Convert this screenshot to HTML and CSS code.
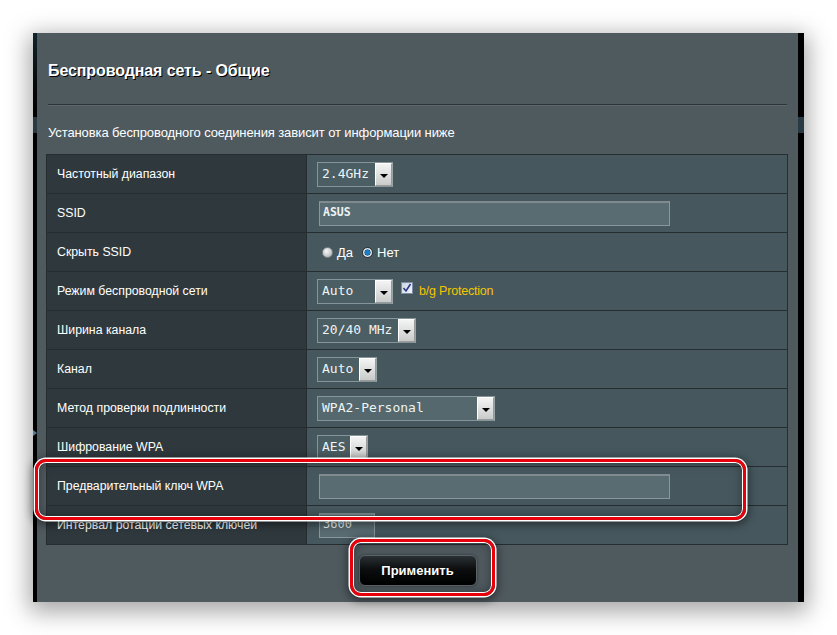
FILE: index.html
```html
<!DOCTYPE html>
<html lang="ru">
<head>
<meta charset="utf-8">
<title>Беспроводная сеть - Общие</title>
<link rel="stylesheet" href="styles.css">
</head>
<body>
<div class="frame">
  <div class="strip-left"><span class="strip-arrow"></span></div>
  <div class="main">
    <h1 class="title">Беспроводная сеть - Общие</h1>
    <div class="rule"></div>
    <p class="subtitle">Установка беспроводного соединения зависит от информации ниже</p>
    <div class="table">
      <div class="row">
        <div class="label">Частотный диапазон</div>
        <div class="value"><span class="select w-band"><span class="sel-text">2.4GHz</span><span class="sel-btn"></span></span></div>
      </div>
      <div class="row">
        <div class="label">SSID</div>
        <div class="value"><span class="input w-long"><span class="in-text bold">ASUS</span></span></div>
      </div>
      <div class="row">
        <div class="label">Скрыть SSID</div>
        <div class="value radios">
          <span class="radio"></span><span class="radio-label">Да</span>
          <span class="radio checked"></span><span class="radio-label">Нет</span>
        </div>
      </div>
      <div class="row">
        <div class="label">Режим беспроводной сети</div>
        <div class="value">
          <span class="select w-mode"><span class="sel-text">Auto</span><span class="sel-btn"></span></span>
          <span class="checkbox"><svg viewBox="0 0 10 10" width="10" height="10"><path d="M1.5 5 L4 8 L8.5 1" fill="none" stroke="#2b3a8c" stroke-width="1.6"/></svg></span>
          <span class="protect">b/g Protection</span>
        </div>
      </div>
      <div class="row">
        <div class="label">Ширина канала</div>
        <div class="value"><span class="select w-width"><span class="sel-text">20/40 MHz</span><span class="sel-btn"></span></span></div>
      </div>
      <div class="row">
        <div class="label">Канал</div>
        <div class="value"><span class="select w-chan"><span class="sel-text">Auto</span><span class="sel-btn"></span></span></div>
      </div>
      <div class="row">
        <div class="label">Метод проверки подлинности</div>
        <div class="value"><span class="select w-auth light"><span class="sel-text">WPA2-Personal</span><span class="sel-btn"></span></span></div>
      </div>
      <div class="row">
        <div class="label">Шифрование WPA</div>
        <div class="value"><span class="select w-enc"><span class="sel-text">AES</span><span class="sel-btn"></span></span></div>
      </div>
      <div class="row">
        <div class="label">Предварительный ключ WPA</div>
        <div class="value"><span class="input w-long"></span></div>
      </div>
      <div class="row">
        <div class="label">Интервал ротации сетевых ключей</div>
        <div class="value"><span class="input w-short"><span class="in-text">3600</span></span></div>
      </div>
    </div>
    <div class="actions"><button class="apply" type="button">Применить</button></div>
    <div class="hl hl-key"></div>
    <div class="hl hl-btn"></div>
  </div>
  <div class="strip-right"></div>
</div>
</body>
</html>
```

FILE: styles.css
```css
html, body {
  margin: 0;
  padding: 0;
  background: #ffffff;
}
body {
  font-family: "Liberation Sans", Arial, sans-serif;
  width: 837px;
  height: 635px;
  overflow: hidden;
}
.frame {
  margin: 33px 0 0 33px;
  width: 771px;
  height: 569px;
  display: flex;
  box-shadow: 0 6px 22px 4px rgba(0, 0, 0, 0.35);
}
.strip-left {
  width: 4px;
  position: relative;
  background: linear-gradient(to bottom, #10252c 0px, #06090a 50px, #000 84px, #000 84px, #2a3a45 84px, #2a3a45 100px, #000 100px, #000 100%);
}
.strip-arrow {
  position: absolute;
  left: 0;
  top: 397px;
  width: 0;
  height: 0;
  border-top: 3px solid transparent;
  border-bottom: 3px solid transparent;
  border-left: 4px solid #4f7da0;
}
.strip-right {
  width: 6px;
  background: linear-gradient(to bottom, #000 0, #000 84px, #2a3a45 84px, #2a3a45 100px, #000 100px, #000 100%);
}
.main {
  flex: 1;
  position: relative;
  background: #4f5a5f;
  padding: 0 0 0 9px;
  box-sizing: border-box;
}
.title {
  margin: 0;
  padding: 28px 0 0 2px;
  font-size: 16px;
  line-height: 20px;
  font-weight: bold;
  color: #ffffff;
  text-shadow: 1px 1px 0 #000;
  letter-spacing: -0.1px;
}
.rule {
  margin: 23px 0 0 2px;
  width: 739px;
  height: 1px;
  background: #2c3438;
  box-shadow: 0 1px 0 #5d686c;
}
.subtitle {
  margin: 19px 0 0 2px;
  font-size: 13px;
  line-height: 18px;
  color: #ffffff;
  letter-spacing: -0.1px;
}
.table {
  margin-top: 12px;
  width: 742px;
  border: 1px solid #262d30;
  box-sizing: border-box;
}
.row {
  display: grid;
  grid-template-columns: 260px 1fr;
  height: 39px;
  border-top: 1px solid #262d30;
  box-sizing: border-box;
}
.row:first-child {
  border-top: none;
  height: 38px;
}
.label {
  background: #2f393d;
  border-right: 1px solid #262d30;
  padding-left: 10px;
  display: flex;
  align-items: center;
  font-size: 12.3px;
  color: #ffffff;
}
.value {
  background: #46585e;
  padding-left: 10px;
  display: flex;
  align-items: center;
  font-size: 12px;
  color: #ffffff;
}
.select {
  display: inline-flex;
  align-items: stretch;
  height: 25px;
  box-sizing: border-box;
  border: 1px solid #86959a;
  border-right-color: #9aa5a9;
  background: #4b5e63;
}
.select.light {
  background: #55686d;
}
.sel-text {
  flex: 1;
  padding-left: 4px;
  font-family: "DejaVu Sans Mono", "Liberation Mono", monospace;
  font-size: 13px;
  line-height: 22px;
  color: #eef3f4;
}
.sel-btn {
  width: 15px;
  position: relative;
  border: 1px solid #ffffff;
  border-right-color: #9a9a9a;
  border-bottom-color: #9a9a9a;
  background: linear-gradient(to bottom, #f4f4f4, #c9cbcb);
}
.sel-btn::after {
  content: "";
  position: absolute;
  left: 4px;
  top: 10px;
  border-left: 4px solid transparent;
  border-right: 4px solid transparent;
  border-top: 4px solid #000;
}
.w-band { width: 76px; }
.w-mode { width: 76px; }
.w-width { width: 99px; }
.w-chan { width: 60px; }
.w-auth { width: 178px; }
.w-enc { width: 51px; }
.input {
  display: inline-block;
  margin-left: 2px;
  height: 25px;
  box-sizing: border-box;
  border: 1px solid #8a979b;
  border-top: 2px solid #7f8b8f;
  background: #596c72;
}
.w-long { width: 351px; }
.w-short { width: 56px; }
.in-text {
  display: block;
  padding-left: 3px;
  font-family: "DejaVu Sans Mono", "Liberation Mono", monospace;
  font-size: 12px;
  line-height: 18px;
  color: #eef3f4;
}
.in-text.bold {
  font-weight: bold;
  font-size: 11.5px;
}
.radio {
  width: 11px;
  height: 11px;
  border-radius: 50%;
  box-sizing: border-box;
  margin-left: 5px;
  border: 1px solid #7d8588;
  background: radial-gradient(circle at 40% 35%, #f6f6f6 0, #d2d5d6 45%, #a4a9ab 100%);
}
.radio.checked {
  margin-left: 9px;
  border: 1px solid #2c3336;
  background: radial-gradient(circle, #1a7fc8 0, #1a7fc8 2.2px, #0d4f80 2.8px, #e9ecee 3.4px, #c0c5c7 100%);
}
.radio-label {
  margin-left: 4px;
  font-size: 13px;
}
.checkbox {
  width: 12px;
  height: 12px;
  margin-left: 8px;
  box-sizing: border-box;
  border: 1px solid #7d8ea8;
  background: linear-gradient(to bottom right, #c9d2de, #f5f7fa);
  display: inline-flex;
  align-items: center;
  justify-content: center;
  align-self: center;
  margin-top: -6px;
}
.protect {
  margin-left: 6px;
  color: #f5c400;
  font-size: 12.5px;
  letter-spacing: -0.2px;
}
.actions {
  display: flex;
  justify-content: center;
  padding: 10px 9px 0 0;
}
.apply {
  width: 118px;
  height: 31px;
  border: 1px solid #5b6367;
  border-radius: 6px;
  background: linear-gradient(to bottom, #2a3134 0%, #0c0e0f 45%, #000 100%);
  color: #ffffff;
  font-family: "Liberation Sans", Arial, sans-serif;
  font-weight: bold;
  font-size: 13px;
  text-shadow: 1px 1px 0 #000;
  box-shadow: 0 0 3px rgba(0, 0, 0, 0.5);
  padding: 0;
}
.hl {
  position: absolute;
  box-sizing: border-box;
  border: 3px solid #e8000b;
  border-radius: 11px;
  box-shadow: 0 0 0 1.5px #ffffff, inset 0 0 0 1px #ffffff, 0 2px 9px 3px rgba(0, 0, 0, 0.45), inset 0 0 10px 2px rgba(0, 0, 0, 0.3);
}
.hl-key {
  left: -2px;
  top: 426px;
  width: 711px;
  height: 61px;
}
.hl-btn {
  left: 313px;
  top: 506px;
  width: 145px;
  height: 57px;
}
```
